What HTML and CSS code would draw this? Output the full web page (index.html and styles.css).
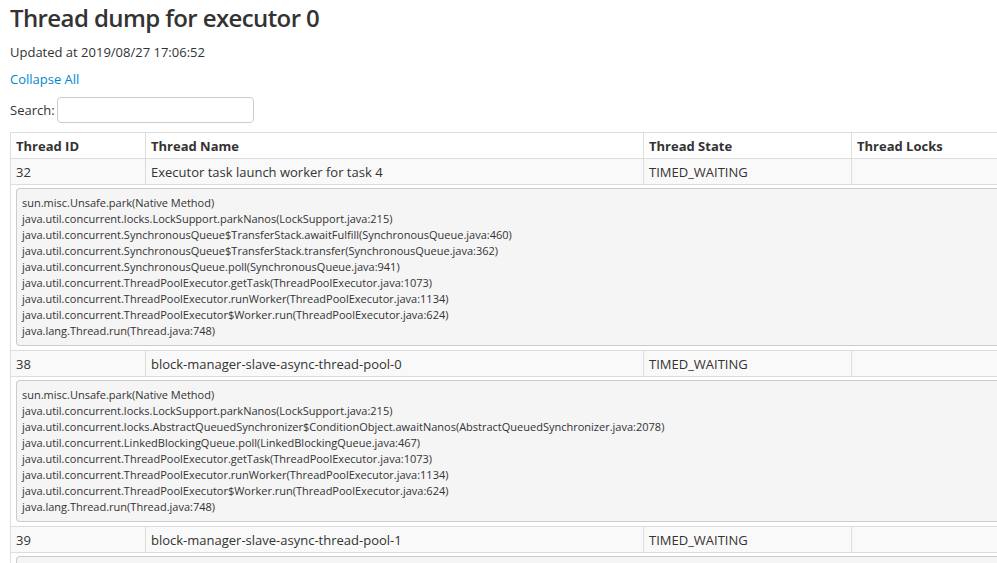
FILE: index.html
```html
<!DOCTYPE html>
<html>
<head>
<meta charset="utf-8">
<title>Thread dump for executor 0</title>
<link rel="stylesheet" href="styles.css">
</head>
<body>
<h3 class="title">Thread dump for executor 0</h3>
<p class="updated">Updated at 2019/08/27 17:06:52</p>
<p class="collapse"><a href="#" class="link">Collapse All</a></p>
<div class="search"><label class="search-label">Search:</label><input class="search-input" type="text"></div>
<table class="threads">
  <thead>
    <tr>
      <th class="c-id">Thread ID</th>
      <th class="c-name">Thread Name</th>
      <th class="c-state">Thread State</th>
      <th class="c-locks">Thread Locks</th>
    </tr>
  </thead>
  <tbody>
    <tr class="row">
      <td>32</td>
      <td>Executor task launch worker for task 4</td>
      <td>TIMED_WAITING</td>
      <td></td>
    </tr>
    <tr class="stack-row">
      <td colspan="4"><div class="stack">sun.misc.Unsafe.park(Native Method)
java.util.concurrent.locks.LockSupport.parkNanos(LockSupport.java:215)
java.util.concurrent.SynchronousQueue$TransferStack.awaitFulfill(SynchronousQueue.java:460)
java.util.concurrent.SynchronousQueue$TransferStack.transfer(SynchronousQueue.java:362)
java.util.concurrent.SynchronousQueue.poll(SynchronousQueue.java:941)
java.util.concurrent.ThreadPoolExecutor.getTask(ThreadPoolExecutor.java:1073)
java.util.concurrent.ThreadPoolExecutor.runWorker(ThreadPoolExecutor.java:1134)
java.util.concurrent.ThreadPoolExecutor$Worker.run(ThreadPoolExecutor.java:624)
java.lang.Thread.run(Thread.java:748)</div></td>
    </tr>
    <tr class="row">
      <td>38</td>
      <td>block-manager-slave-async-thread-pool-0</td>
      <td>TIMED_WAITING</td>
      <td></td>
    </tr>
    <tr class="stack-row">
      <td colspan="4"><div class="stack">sun.misc.Unsafe.park(Native Method)
java.util.concurrent.locks.LockSupport.parkNanos(LockSupport.java:215)
java.util.concurrent.locks.AbstractQueuedSynchronizer$ConditionObject.awaitNanos(AbstractQueuedSynchronizer.java:2078)
java.util.concurrent.LinkedBlockingQueue.poll(LinkedBlockingQueue.java:467)
java.util.concurrent.ThreadPoolExecutor.getTask(ThreadPoolExecutor.java:1073)
java.util.concurrent.ThreadPoolExecutor.runWorker(ThreadPoolExecutor.java:1134)
java.util.concurrent.ThreadPoolExecutor$Worker.run(ThreadPoolExecutor.java:624)
java.lang.Thread.run(Thread.java:748)</div></td>
    </tr>
    <tr class="row">
      <td>39</td>
      <td>block-manager-slave-async-thread-pool-1</td>
      <td>TIMED_WAITING</td>
      <td></td>
    </tr>
    <tr class="stack-row">
      <td colspan="4"><div class="stack">sun.misc.Unsafe.park(Native Method)
java.util.concurrent.locks.LockSupport.parkNanos(LockSupport.java:215)
java.util.concurrent.locks.AbstractQueuedSynchronizer$ConditionObject.awaitNanos(AbstractQueuedSynchronizer.java:2078)
java.util.concurrent.LinkedBlockingQueue.poll(LinkedBlockingQueue.java:467)
java.util.concurrent.ThreadPoolExecutor.getTask(ThreadPoolExecutor.java:1073)
java.util.concurrent.ThreadPoolExecutor.runWorker(ThreadPoolExecutor.java:1134)
java.util.concurrent.ThreadPoolExecutor$Worker.run(ThreadPoolExecutor.java:624)
java.lang.Thread.run(Thread.java:748)</div></td>
    </tr>
  </tbody>
</table>
</body>
</html>
```

FILE: styles.css
```css
html, body {
  margin: 0;
  padding: 0;
}
body {
  padding: 0 10px;
  font-family: "Open Sans", "Liberation Sans", sans-serif;
  color: #333;
  font-size: 13px;
  background: #fff;
}
.title {
  margin: 0;
  padding-top: 2px;
  font-size: 24px;
  line-height: 32px;
  font-weight: 600;
  letter-spacing: -0.6px;
}
.updated {
  margin: 8px 0 0;
  line-height: 20px;
  font-size: 13px;
}
.collapse {
  margin: 7px 0 0;
  line-height: 20px;
}
.link {
  color: #0088cc;
  text-decoration: none;
}
.search {
  display: flex;
  align-items: center;
  margin-top: 8px;
}
.search-label {
  line-height: 20px;
  margin-right: 2px;
}
.search-input {
  box-sizing: border-box;
  width: 197px;
  height: 26px;
  border: 1px solid #ccc;
  border-radius: 4px;
  margin: 0;
  padding: 4px 6px;
  font-family: inherit;
}
.threads {
  margin-top: 9px;
  border-collapse: collapse;
  width: 1140px;
  border: 1px solid #ddd;
}
.threads th,
.threads td {
  border: 1px solid #ddd;
  text-align: left;
  padding: 1px 5px 0;
  height: 24px;
  line-height: 18px;
  font-size: 13px;
}
.threads th {
  font-weight: 700;
}
.c-id { width: 124px; }
.c-name { width: 487px; }
.c-state { width: 197px; }
.row td {
  background: #f9f9f9;
}
.stack-row td {
  background: #fff;
  padding: 3px 0 4px 5px;
  height: auto;
}
.stack {
  white-space: pre;
  background: #f5f5f5;
  border: 1px solid #ccc;
  border-right: none;
  border-radius: 4px 0 0 4px;
  padding: 6px 5px 6px;
  font-size: 11px;
  line-height: 16px;
  overflow: hidden;
}
```
